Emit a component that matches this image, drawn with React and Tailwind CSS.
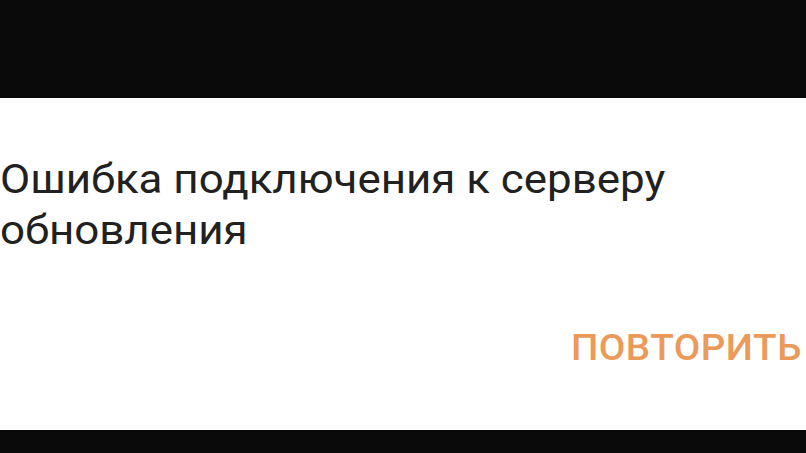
export default function App() {
  return (
    <div className="w-[806px] h-[453px] flex flex-col bg-[#0a0a0a] overflow-hidden" style={{ fontFamily: 'Roboto, "Noto Sans", sans-serif' }}>
      {/* фон сверху */}
      <div className="h-[98px] shrink-0 bg-[#0a0a0a]" />

      {/* диалог */}
      <div className="h-[332px] shrink-0 bg-white flex flex-col">
        <p className="mt-[56px] text-[41px] leading-[51px] text-[#212121] origin-left scale-x-[1.07]">
          Ошибка подключения к серверу обновления
        </p>
        <div className="mt-auto mb-[62px] flex justify-end pr-[4px]">
          <button className="text-[36px] leading-[40px] font-medium text-[#eb9a5a] tracking-[0.5px] origin-right scale-x-[1.07]">
            ПОВТОРИТЬ
          </button>
        </div>
      </div>

      {/* фон снизу */}
      <div className="flex-1 bg-[#0a0a0a]" />
    </div>
  )
}
